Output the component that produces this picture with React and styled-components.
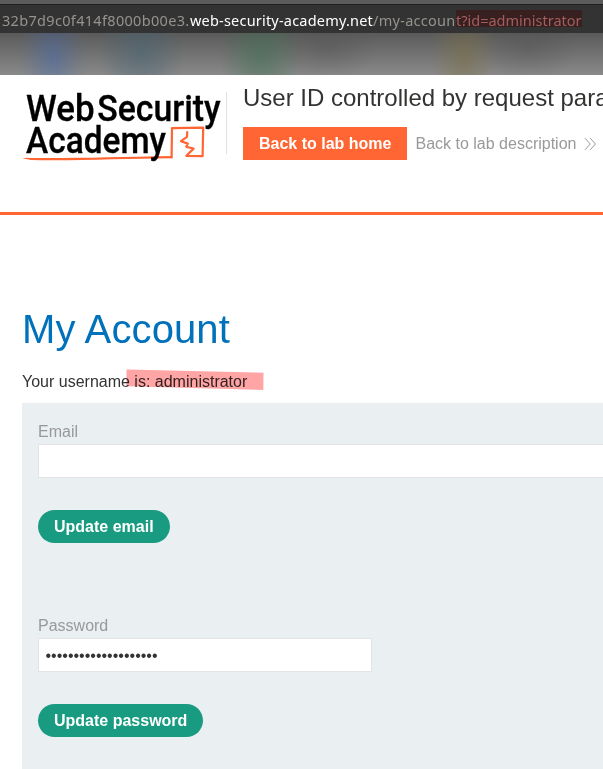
import React from 'react';
import styled, { createGlobalStyle } from 'styled-components';

const GlobalStyle = createGlobalStyle`
  *, *::before, *::after { box-sizing: border-box; }
  html, body { margin: 0; overflow: hidden; background: #fff; }
  body { font: 16px/20px "Liberation Sans", Arial, sans-serif; color: #333332; }
`;

const Page = styled.div`
  width: 100%;
  height: 769px;
  overflow: hidden;
  display: flex;
  flex-direction: column;
`;

const AddressBar = styled.div`
  flex: none;
  height: 33px;
  border-top: 4px solid #5c5c5c;
  background: #333;
  box-shadow: inset 0 1px #202020;
  display: flex;
  align-items: center;
  justify-content: flex-start;
  padding-top: 3px;
  white-space: pre;
  font: 14.5px/20px "Noto Sans", "Open Sans", sans-serif;
`;

const UrlPart = styled.span`
  flex: none;
  width: ${(p) => p.$width}px;
  margin-left: ${(p) => p.$start || 0}px;
  letter-spacing: ${(p) => p.$spacing || 0}px;
  color: ${(p) => (p.$host ? '#fff' : '#96938e')};
`;

const UrlQuery = styled.span`
  flex: none;
  height: 17px;
  margin-top: -3px;
  line-height: 20px;
  width: 126px;
  color: #a35f5d;
  background: #382021;
`;

const BookmarksBar = styled.div`
  flex: none;
  height: 42px;
  background:
    radial-gradient(ellipse 34px 60px at 53px 24px, rgba(67, 103, 170, .5), rgba(67, 103, 170, .22) 50%, transparent),
    radial-gradient(ellipse 42px 60px at 141px 20px, rgba(66, 98, 116, .5), rgba(66, 98, 116, .28) 50%, transparent),
    radial-gradient(ellipse 42px 60px at 261px 22px, rgba(62, 112, 82, .55), rgba(62, 112, 82, .28) 50%, transparent),
    radial-gradient(ellipse 34px 60px at 464px 24px, rgba(126, 113, 65, .5), rgba(126, 113, 65, .24) 50%, transparent),
    radial-gradient(ellipse 50px 34px at 327px 14px, rgba(78, 78, 78, .35), transparent),
    radial-gradient(ellipse 50px 34px at 528px 14px, rgba(78, 78, 78, .35), transparent),
    linear-gradient(#5a5a5a, #898989);
`;

const LabHeader = styled.header`
  flex: none;
  height: 140px;
  border-bottom: 3px solid #ff6633;
  padding: 9px 0 0 22px;
  display: flex;
  align-items: flex-start;
  white-space: nowrap;
`;

const Logo = styled.svg`
  flex: none;
  width: 204px;
  height: 82px;
  display: block;
`;

const LogoText = styled.text`
  font: 500 37.7px Roboto, "Liberation Sans", sans-serif;
  fill: #000;
  stroke: #000;
  stroke-width: 0.3px;
`;

const Divider = styled.div`
  flex: none;
  width: 1px;
  height: 62px;
  margin: 8px 16px 0 0;
  background: #e1e1e1;
`;

const LabTitle = styled.h2`
  margin: 0;
  font-size: 24px;
  line-height: 28px;
  font-weight: 400;
`;

const LabActions = styled.div`
  display: flex;
  align-items: center;
  margin-top: 15px;
`;

const HomeButton = styled.a`
  height: 33px;
  padding: 0 16px;
  margin-right: 8px;
  line-height: 33px;
  font-weight: 700;
  color: #fff;
  background: #ff6633;
`;

const DescriptionLink = styled.a`
  display: flex;
  align-items: center;
  gap: 8px;
  color: #999;
`;

const Content = styled.main`
  flex: 1;
  padding: 91px 0 0 22px;
  display: flex;
  flex-direction: column;
  align-items: flex-start;
  min-height: 0;
`;

const Heading = styled.h1`
  margin: 0;
  font-size: 40px;
  line-height: 46px;
  font-weight: 400;
  letter-spacing: 0.12px;
  color: #0071ba;
`;

const Username = styled.p`
  position: relative;
  margin: 20px 0 11px;
  line-height: 20px;
`;

const Marker = styled.svg`
  position: absolute;
  left: 104px;
  top: -4px;
  width: 139px;
  height: 24px;
  mix-blend-mode: multiply;
`;

const FormPanel = styled.div`
  flex: 1;
  width: 690px;
  padding: 19px 16px 0;
  background: #eaeff2;
`;

const Form = styled.form`
  display: flex;
  flex-direction: column;
  align-items: flex-start;
  margin-bottom: 73px;
`;

const Label = styled.label`
  line-height: 20px;
  color: #999;
  margin-bottom: 2px;
`;

const Input = styled.input`
  width: ${(p) => p.$width};
  height: 34px;
  padding: 2px 6px 0 6.5px;
  border: 1px solid #e3e3e3;
  border-radius: 0;
  background: #fff;
  outline: none;
  color: #333332;
  font: 16px "Liberation Sans", Arial, sans-serif;
`;

const SubmitButton = styled.button`
  height: 33px;
  margin-top: 32px;
  padding: 0 16px;
  border: 0;
  border-radius: 17px;
  background: #189b80;
  color: #fff;
  font: 700 16px/33px "Liberation Sans", Arial, sans-serif;
`;

function AcademyLogo() {
  return (
    <Logo viewBox="22 84 204 82" role="img" aria-label="Web Security Academy">
      <path
        d="M171.6 157.4 L172 128.2 L203.2 127.6 L202.6 156.2 L186.4 155.8 L193.6 148.6 L186.2 146.8 L187.8 143.6 L181 141.2 L187 136.8 L187.2 132"
        fill="none"
        stroke="#ff6633"
        strokeWidth="2.2"
        strokeLinejoin="round"
        strokeLinecap="round"
      />
      <path d="M22.5 158.2 Q26 157.2 30 158 C75 158.4 120 157 172.5 156 L172.2 158.2 C125 158.4 75 161 31 160 Z" fill="#ff6633" />
      <LogoText x="26" y="120.7" textLength="68.5" lengthAdjust="spacingAndGlyphs">Web</LogoText>
      <LogoText x="97.2" y="120.7" textLength="123.5" lengthAdjust="spacingAndGlyphs">Security</LogoText>
      <LogoText x="26" y="153" textLength="140" lengthAdjust="spacingAndGlyphs">Academy</LogoText>
    </Logo>
  );
}

function DoubleChevron() {
  return (
    <svg width="13" height="14" viewBox="0 0 13 14" fill="none" stroke="#999" strokeWidth="1">
      <path d="M1 1.2 6.2 7 1 12.8M6.2 1.2 11.5 7 6.2 12.8" />
    </svg>
  );
}

export default function App() {
  return (
    <>
      <GlobalStyle />
      <Page>
        <AddressBar>
          <UrlPart $start={2} $width={188} $spacing={0.32}>32b7d9c0f414f8000b00e3.</UrlPart>
          <UrlPart $host $width={183} $spacing={0.2}>web-security-academy.net</UrlPart>
          <UrlPart $width={83} $spacing={0.28}>/my-accoun</UrlPart>
          <UrlQuery>t?id=administrator</UrlQuery>
        </AddressBar>
        <BookmarksBar />
        <LabHeader>
          <AcademyLogo />
          <Divider />
          <div>
            <LabTitle>User ID controlled by request parameter</LabTitle>
            <LabActions>
              <HomeButton>Back to lab home</HomeButton>
              <DescriptionLink>Back to lab description <DoubleChevron /></DescriptionLink>
            </LabActions>
          </div>
        </LabHeader>
        <Content>
          <Heading>My Account</Heading>
          <Username>
            Your username is: administrator
            <Marker viewBox="0 0 139 24" aria-hidden="true">
              <path d="M0.5 1.5 L137.5 4.8 L137.3 22 L0.5 18.3Z" fill="#ffa5a5" />
            </Marker>
          </Username>
          <FormPanel>
            <Form>
              <Label>Email</Label>
              <Input $width="100%" type="email" />
              <SubmitButton type="button">Update email</SubmitButton>
            </Form>
            <Form>
              <Label>Password</Label>
              <Input $width="334px" type="password" defaultValue="aaaaaaaaaaaaaaaaaaaa" />
              <SubmitButton type="button">Update password</SubmitButton>
            </Form>
          </FormPanel>
        </Content>
      </Page>
    </>
  );
}
